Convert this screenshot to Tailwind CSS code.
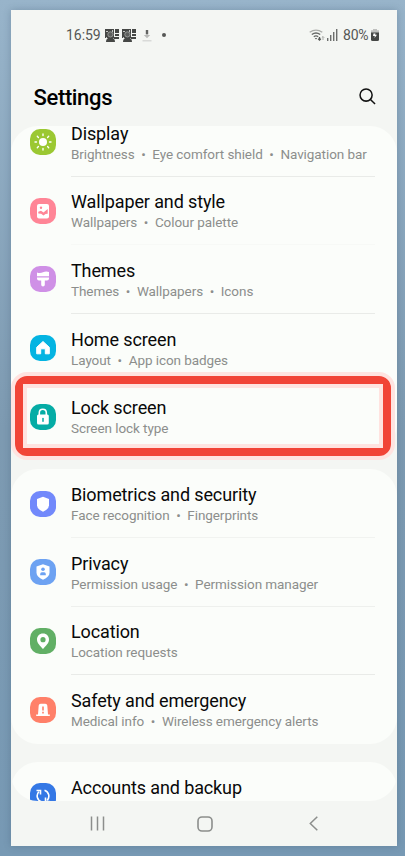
<!DOCTYPE html>
<html lang="en">
<head>
<meta charset="utf-8">
<title>Settings</title>
<script src="https://cdn.jsdelivr.net/npm/@tailwindcss/browser@4"></script>
</head>
<body class="w-[405px] h-[856px] overflow-hidden bg-linear-to-b from-[#98b4ca] via-[#7d9ab1] to-[#7799b4] pt-[10px] pl-[11px] font-['Roboto',sans-serif]">
<div class="relative w-[386px] h-[836px] bg-[#f4f6f3] flex flex-col shadow-[0_0_7px_rgba(50,75,100,0.3)]">
  <header class="h-[116px] shrink-0">
    <div class="h-[50px] pl-[55px] pr-[18px] flex items-center justify-between text-[#555755] text-[14px]">
      <div class="flex items-center">
        <span class="w-[39px] tracking-[-0.05px]">16:59</span>
        <svg class="w-[14px] h-[13px]" viewBox="0 0 14 13"><path fill="#454745" d="M0 0h9v9H0zM10 0h4v4h-4zM10 5h4v2h-4zM9 8h5v2H9zM1 13q0-4.500 4.500-4.500T10 13z"/><circle cx="5.400" cy="5.400" r="2.600" fill="#5d5f5d" stroke="#a5a7a4" stroke-width=".8"/><path fill="#c5c6c4" d="M1 2h2v1H1zM7 1h1v2H7zM1 8h1v1H1z"/></svg>
        <svg class="w-[14px] h-[13px] ml-[3px]" viewBox="0 0 14 13"><path fill="#454745" d="M0 0h9v9H0zM10 0h4v4h-4zM10 5h4v2h-4zM9 8h5v2H9zM1 13q0-4.500 4.500-4.500T10 13z"/><circle cx="5.400" cy="5.400" r="2.600" fill="#5d5f5d" stroke="#a5a7a4" stroke-width=".8"/><path fill="#c5c6c4" d="M1 2h2v1H1zM7 1h1v2H7zM1 8h1v1H1z"/></svg>
        <svg class="w-[10px] h-[13px] ml-[6px]" viewBox="0 0 10 13"><path fill="#626462" d="M3.8 1h2.4v4H3.8z"/><path fill="#b9bab8" d="M3.8 5h2.4v1h2L5 9.300 1.800 6h2z"/><path fill="#d9dad8" d="M.5 11h9v1.500h-9z"/></svg>
        <span class="size-[4px] rounded-full bg-[#555755] ml-[10px]"></span>
      </div>
      <div class="flex items-center">
        <svg class="w-[16px] h-[12px]" viewBox="0 0 16 12" fill="none" stroke-width="1.300"><path stroke="#aaaca9" d="M.7 3.300Q7 -1.200 13.300 3.300"/><path stroke="#666866" d="M2.800 5.500Q7 2.500 11.200 5.500M4.800 7.700Q7 6 9.200 7.700"/><path fill="#555755" d="M5.800 9 7 10.400 8.200 9z"/><path stroke="#555755" d="M10.500 8v3M9.200 9.700l1.300 1.300 1.300-1.300"/><path stroke="#aaaca9" stroke-width="1" d="M14 11V7.500M12.800 8.700 14 7.500l1.200 1.200"/></svg>
        <svg class="w-[11px] h-[12px] ml-[2px]" viewBox="0 0 11 12" fill="#6d6f6d"><path d="M0 9h1.400v3H0zM3 6h1.400v6H3zM6 3h1.400v9H6zM9 0h1.400v12H9z"/></svg>
        <span class="w-[28px] ml-[5px] tracking-[-0.200px] whitespace-nowrap">80%</span>
        <svg class="w-[8px] h-[12px]" viewBox="0 0 8 12"><path fill="#bfc0be" d="M2 0h4v1.200h2V5H0V1.200h2z"/><path fill="#454745" d="M0 3.500h8v7Q8 12 6.500 12h-5Q0 12 0 10.500z"/><path fill="#fff" d="M2.500 4.500h2L4.200 5.800H6L3.500 9 3.800 7H2z"/></svg>
      </div>
    </div>
    <div class="h-[74px] pl-[22.500px] pr-[21.500px] flex items-center justify-between">
      <h1 class="text-[22px] font-medium text-black tracking-[-0.350px]">Settings</h1>
      <svg class="w-[17px] h-[17px] -mt-[2px]" viewBox="0 0 18 18" fill="none" stroke="#111" stroke-width="1.600"><circle cx="7.500" cy="7.500" r="6.400"/><path d="m12.100 12.100 4.900 4.900"/></svg>
    </div>
  </header>

  <main class="h-[675px] shrink-0 overflow-hidden rounded-[27px]">
    <section class="-mt-[18px] rounded-b-[27px] bg-[#fbfdfa]">
      <div class="h-[68.600px] pl-[19px] flex items-center">
        <svg class="size-[26px] shrink-0 mr-[15px]" viewBox="0 0 26 26"><rect width="26" height="26" rx="10" fill="#9bc832"/><circle cx="13" cy="13" r="4" fill="#fff"/><path stroke="#fff" stroke-width="1.400" stroke-linecap="round" d="M13 5v1.500M13 19.500V21M5 13h1.500M19.500 13H21M7.300 7.300l1.100 1.100M17.600 17.600l1.100 1.100M7.300 18.700l1.100-1.100M17.600 8.400l1.100-1.100"/></svg>
        <div class="w-[304px] h-full pt-[3px] border-b border-[#e9ebe8] flex flex-col justify-center"><h2 class="text-[18px] leading-[22px] text-[#090909] tracking-[-0.120px]">Display</h2><p class="text-[13.500px] leading-[19px] tracking-[-0.070px] text-[#8c8e8c] whitespace-nowrap">Brightness<span class="mx-[6.600px]">•</span>Eye comfort shield<span class="mx-[6.600px]">•</span>Navigation bar</p></div>
      </div>
      <div class="h-[68.600px] pl-[19px] flex items-center">
        <svg class="size-[26px] shrink-0 mr-[15px]" viewBox="0 0 26 26"><rect width="26" height="26" rx="10" fill="#ff8596"/><rect x="7" y="6" width="12" height="14.500" rx="2" fill="#fff"/><circle cx="11" cy="9.800" r="1.200" fill="#ff8596"/><path fill="#ff8596" d="M8.300 15.500V13.800L11 12.800l2.500 1.600 4.200-3.400v4.800l-2.200.2-2 1.500-2.400-1.700z"/></svg>
        <div class="w-[304px] h-full pt-[3px] border-b border-[#f7f9f6] flex flex-col justify-center"><h2 class="text-[18px] leading-[22px] text-[#090909] tracking-[-0.120px]">Wallpaper and style</h2><p class="text-[13.500px] leading-[19px] tracking-[-0.070px] text-[#8c8e8c] whitespace-nowrap">Wallpapers<span class="mx-[6.600px]">•</span>Colour palette</p></div>
      </div>
      <div class="h-[68.600px] pl-[19px] flex items-center">
        <svg class="size-[26px] shrink-0 mr-[15px]" viewBox="0 0 26 26"><rect width="26" height="26" rx="10" fill="#cf90e6"/><path fill="#fff" d="M7 6.500Q10 7.800 13 6.300T19 6v4.300H7zM7 11.500h12v1q0 2-2 2h-2.200v4.300q0 1.800-1.800 1.800t-1.800-1.800v-4.300H9q-2 0-2-2z"/></svg>
        <div class="w-[304px] h-full pt-[3px] border-b border-[#e9ebe8] flex flex-col justify-center"><h2 class="text-[18px] leading-[22px] text-[#090909] tracking-[-0.120px]">Themes</h2><p class="text-[13.500px] leading-[19px] tracking-[-0.070px] text-[#8c8e8c] whitespace-nowrap">Themes<span class="mx-[6.600px]">•</span>Wallpapers<span class="mx-[6.600px]">•</span>Icons</p></div>
      </div>
      <div class="h-[68.600px] pl-[19px] flex items-center">
        <svg class="size-[26px] shrink-0 mr-[15px]" viewBox="0 0 26 26"><rect width="26" height="26" rx="10" fill="#04b4e2"/><path fill="#fff" stroke="#fff" stroke-linejoin="round" d="m13 6.500 6.300 5.800v6.500h-4v-5h-4.600v5h-4v-6.500z"/></svg>
        <div class="w-[304px] h-full pt-[3px] border-b border-[#e9ebe8] flex flex-col justify-center"><h2 class="text-[18px] leading-[22px] text-[#090909] tracking-[-0.120px]">Home screen</h2><p class="text-[13.500px] leading-[19px] tracking-[-0.070px] text-[#8c8e8c] whitespace-nowrap">Layout<span class="mx-[6.600px]">•</span>App icon badges</p></div>
      </div>
      <div class="h-[68.600px] pl-[19px] flex items-center">
        <svg class="size-[26px] shrink-0 mr-[15px]" viewBox="0 0 26 26"><rect width="26" height="26" rx="10" fill="#05aca5"/><path fill="none" stroke="#fff" stroke-width="1.600" d="M9.300 12V8.800q0-3.500 3.500-3.500t3.500 3.500V12"/><rect x="7" y="10.500" width="11.800" height="10" rx="1.500" fill="#fff"/><path stroke="#05aca5" stroke-width="1.500" stroke-linecap="round" d="M13 14.500v2.700"/></svg>
        <div class="w-[304px] h-full pt-[2px] flex flex-col justify-center"><h2 class="text-[18px] leading-[22px] text-[#090909] tracking-[-0.120px]">Lock screen</h2><p class="text-[13.500px] leading-[19px] tracking-[-0.070px] text-[#8c8e8c] whitespace-nowrap">Screen lock type</p></div>
      </div>
    </section>

    <section class="mt-[18.500px] rounded-[27px] bg-[#fbfdfa]">
      <div class="h-[68.600px] pl-[19px] flex items-center">
        <svg class="size-[26px] shrink-0 mr-[15px]" viewBox="0 0 26 26"><rect width="26" height="26" rx="10" fill="#7289fb"/><path fill="#fff" d="M13 5.800 19 8v6.200q0 3.800-6 6.500-6-2.700-6-6.500V8z"/></svg>
        <div class="w-[304px] h-full pt-[3px] border-b border-[#f1f3f0] flex flex-col justify-center"><h2 class="text-[18px] leading-[22px] text-[#090909] tracking-[-0.120px]">Biometrics and security</h2><p class="text-[13.500px] leading-[19px] tracking-[-0.070px] text-[#8c8e8c] whitespace-nowrap">Face recognition<span class="mx-[6.600px]">•</span>Fingerprints</p></div>
      </div>
      <div class="h-[68.600px] pl-[19px] flex items-center">
        <svg class="size-[26px] shrink-0 mr-[15px]" viewBox="0 0 26 26"><rect width="26" height="26" rx="10" fill="#6da2f2"/><path fill="#fff" d="M13 5.200 19.500 7.500v6.200q0 4-6.500 7-6.500-3-6.500-7V7.500z"/><circle cx="13" cy="10.300" r="1.800" fill="#6da2f2"/><path fill="#6da2f2" d="M10.200 16.300v-1.300q0-1.700 1.700-1.700h2.200q1.700 0 1.700 1.700v1.300z"/></svg>
        <div class="w-[304px] h-full pt-[3px] border-b border-[#eef0ed] flex flex-col justify-center"><h2 class="text-[18px] leading-[22px] text-[#090909] tracking-[-0.120px]">Privacy</h2><p class="text-[13.500px] leading-[19px] tracking-[-0.070px] text-[#8c8e8c] whitespace-nowrap">Permission usage<span class="mx-[6.600px]">•</span>Permission manager</p></div>
      </div>
      <div class="h-[68.600px] pl-[19px] flex items-center">
        <svg class="size-[26px] shrink-0 mr-[15px]" viewBox="0 0 26 26"><rect width="26" height="26" rx="10" fill="#61af65"/><path fill="#fff" fill-rule="evenodd" d="M13 5.500c3.700 0 6 2.700 6 6 0 3.800-3.500 6.500-6 9.500-2.500-3-6-5.700-6-9.500 0-3.300 2.300-6 6-6zm0 3.600a2.600 2.600 0 1 0 0 5.200 2.600 2.600 0 0 0 0-5.200z"/></svg>
        <div class="w-[304px] h-full pt-[3px] border-b border-[#e9ebe8] flex flex-col justify-center"><h2 class="text-[18px] leading-[22px] text-[#090909] tracking-[-0.120px]">Location</h2><p class="text-[13.500px] leading-[19px] tracking-[-0.070px] text-[#8c8e8c] whitespace-nowrap">Location requests</p></div>
      </div>
      <div class="h-[68.600px] pl-[19px] flex items-center">
        <svg class="size-[26px] shrink-0 mr-[15px]" viewBox="0 0 26 26"><rect width="26" height="26" rx="10" fill="#ff8069"/><path fill="#fff" d="M8 17.500 8.700 8.500q.2-1.800 2-1.800h4.600q1.800 0 2 1.800l.7 9h1.800V19H6.200v-1.500z"/><path stroke="#ff8069" stroke-width="1.600" d="M13 9.500v4M13 14.800v1.700"/></svg>
        <div class="w-[304px] h-full pt-[2px] flex flex-col justify-center"><h2 class="text-[18px] leading-[22px] text-[#090909] tracking-[-0.120px]">Safety and emergency</h2><p class="text-[13.500px] leading-[19px] tracking-[-0.070px] text-[#8c8e8c] whitespace-nowrap">Medical info<span class="mx-[6.600px]">•</span>Wireless emergency alerts</p></div>
      </div>
    </section>

    <section class="mt-[18px] rounded-t-[27px] bg-[#fbfdfa]">
      <div class="h-[68.600px] pl-[19px] flex items-center">
        <svg class="size-[26px] shrink-0 mr-[15px]" viewBox="0 0 26 26"><rect width="26" height="26" rx="10" fill="#3478e5"/><path fill="none" stroke="#fff" stroke-width="1.600" d="M11.500 18.800A6.200 6.200 0 0 1 8.800 8.700M6.500 7.500h4v4M14.500 7.200a6.200 6.200 0 0 1 2.700 10.100M19.500 18.500h-4v-4"/></svg>
        <div class="w-[304px] h-full pt-[2px] flex flex-col justify-center"><h2 class="text-[18px] leading-[22px] text-[#090909] tracking-[-0.120px]">Accounts and backup</h2><p class="h-[19px]"></p></div>
      </div>
    </section>
  </main>

  <nav class="h-[45px] shrink-0 pl-[79px] pr-[79px] flex items-center">
    <svg class="w-[15px] h-[15px]" viewBox="0 0 15 15" fill="none" stroke="#8c8e8c" stroke-width="1.500"><path d="M1.500.5v14M7.500.5v14M13.500.5v14"/></svg>
    <svg class="w-[16px] h-[16px] ml-[92px]" viewBox="0 0 16 16" fill="none" stroke="#8c8e8c" stroke-width="1.600"><rect x="1" y="1" width="14" height="14" rx="4"/></svg>
    <svg class="w-[9px] h-[15px] ml-auto" viewBox="0 0 9 15" fill="none" stroke="#8c8e8c" stroke-width="1.500"><path d="M8.300.7 1.300 7.500l7 6.800"/></svg>
  </nav>

  <div class="absolute left-0 top-[362px] w-[384px] h-[88px] rounded-[16px] border-4 border-[#ffe3e0]">
    <div class="size-full rounded-[12px] border-8 border-[#f14437]"><div class="size-full border-4 border-[#ffe3e0]"></div></div>
  </div>
</div>
</body>
</html>
